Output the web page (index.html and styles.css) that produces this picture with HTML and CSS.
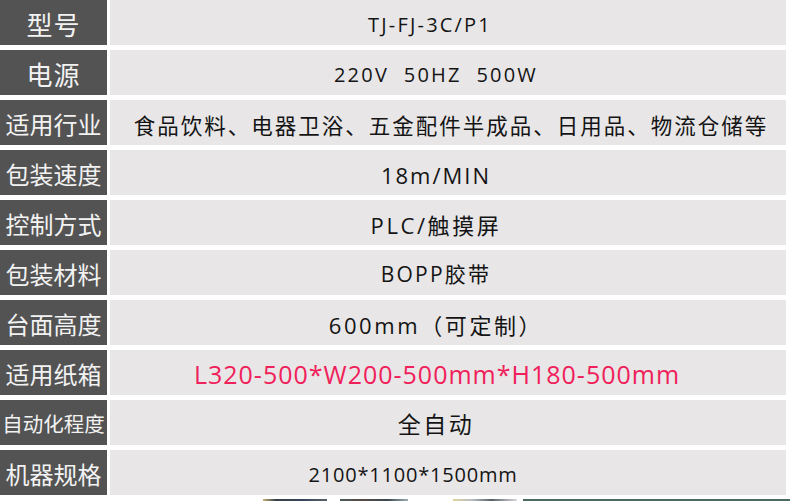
FILE: index.html
```html
<!DOCTYPE html>
<html lang="zh">
<head>
<meta charset="utf-8">
<link rel="stylesheet" href="styles.css">
</head>
<body>
<div class="spec">
  <div class="row"><div class="label l2">型号</div><div class="val v-tj">TJ-FJ-3C/P1</div></div>
  <div class="row"><div class="label l2">电源</div><div class="val">220V&nbsp; 50HZ&nbsp; 500W</div></div>
  <div class="row"><div class="label">适用行业</div><div class="val v-ind">食品饮料、电器卫浴、五金配件半成品、日用品、物流仓储等</div></div>
  <div class="row"><div class="label">包装速度</div><div class="val v-speed">18m/MIN</div></div>
  <div class="row"><div class="label">控制方式</div><div class="val v-plc">PLC/触摸屏</div></div>
  <div class="row"><div class="label">包装材料</div><div class="val v-bopp">BOPP胶带</div></div>
  <div class="row"><div class="label">台面高度</div><div class="val v-height">600mm（可定制）</div></div>
  <div class="row"><div class="label">适用纸箱</div><div class="val v-red">L320-500*W200-500mm*H180-500mm</div></div>
  <div class="row"><div class="label l5">自动化程度</div><div class="val v-cn">全自动</div></div>
  <div class="row"><div class="label">机器规格</div><div class="val v-size">2100*1100*1500mm</div></div>
</div>
<div class="strip">
  <span class="gap g1"></span><span class="p p1"></span>
  <span class="gap g2"></span><span class="p p2"></span>
  <span class="gap g3"></span><span class="p p3"></span>
  <span class="gap g4"></span><span class="p p4"></span>
</div>
</body>
</html>
```
FILE: styles.css
```css
html, body {
  margin: 0;
  padding: 0;
  background: #ffffff;
}
body {
  width: 790px;
  height: 501px;
  overflow: hidden;
  font-family: "Open Sans", "Noto Sans CJK SC", sans-serif;
}
.spec {
  width: 786px;
  display: flex;
  flex-direction: column;
  gap: 5px;
}
.row {
  display: grid;
  grid-template-columns: 107px 1fr;
  column-gap: 3px;
  height: 45px;
}
.label {
  background: #535353;
  color: #f2f2f2;
  font-family: "Noto Sans CJK SC", sans-serif;
  font-size: 24px;
  line-height: 1;
  display: flex;
  align-items: center;
  justify-content: center;
  white-space: nowrap;
  padding-top: 2px;
}
.label.l2 { font-size: 26px; letter-spacing: 1px; }
.label.l5 { font-size: 20.5px; }
.val {
  background: #e8e6e7;
  color: #141414;
  font-size: 20px;
  letter-spacing: 2.2px;
  line-height: 1;
  display: flex;
  align-items: center;
  justify-content: center;
  white-space: nowrap;
  padding-right: 24px;
  padding-top: 4px;
}
.val.v-tj { padding-right: 36px; }
.val.v-speed { font-size: 22px; letter-spacing: 2px; }
.val.v-plc { font-size: 22px; letter-spacing: 2.6px; }
.val.v-bopp { font-size: 21px; letter-spacing: 2.2px; }
.val.v-height { font-size: 22px; letter-spacing: 2.6px; }
.val.v-size { padding-right: 70px; letter-spacing: 0.8px; }
.val.v-cn { font-size: 23px; letter-spacing: 2.5px; }
.val.v-ind {
  padding-right: 0;
  padding-left: 6px;
  font-size: 21.5px;
  letter-spacing: 2px;
  font-family: "Noto Sans CJK SC", sans-serif;
}
.val.v-red { color: #f0205a; font-size: 25px; letter-spacing: 1px; padding-right: 22px; }
.strip {
  margin-top: 4px;
  height: 2px;
  display: flex;
}
.gap.g1 { width: 263px; }
.gap.g2 { width: 13px; }
.gap.g3 { width: 45px; }
.gap.g4 { width: 6px; }
.p1 { width: 64px; background: linear-gradient(90deg, #c9b27a 0, #3b4048 20%, #34465a 60%, #59606a 100%); }
.p2 { width: 68px; background: linear-gradient(90deg, #4a5a5c 0, #5a4a48 30%, #3c4a52 70%, #9ab0b4 100%); }
.p3 { width: 64px; background: linear-gradient(90deg, #e3d39a 0, #b8bcc4 30%, #5a6068 60%, #d9d9df 100%); }
.p4 { flex: 1; background: #4c6b63; }
```
